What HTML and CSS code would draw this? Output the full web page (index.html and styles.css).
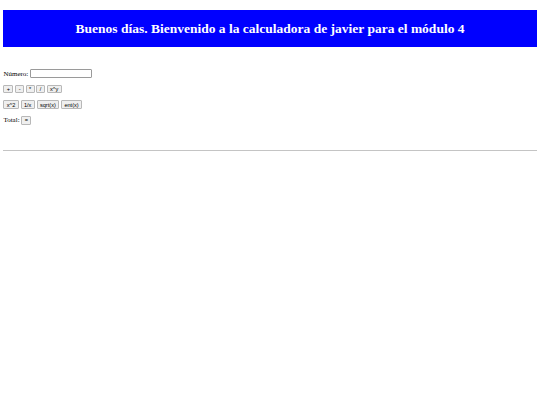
FILE: index.html
```html
<!DOCTYPE html>
<html lang="es">
<head>
<meta charset="utf-8">
<title>Calculadora</title>
<link rel="stylesheet" href="styles.css">
</head>
<body>
<h1 class="banner">Buenos días. Bienvenido a la calculadora de javier para el módulo 4</h1>
<div class="calc">
  <div class="row first">
    <label class="label" for="num">Número:</label>
    <input class="num" id="num" type="text">
  </div>
  <div class="row">
    <button class="btn">+</button>
    <button class="btn">-</button>
    <button class="btn">*</button>
    <button class="btn">/</button>
    <button class="btn">x^y</button>
  </div>
  <div class="row">
    <button class="btn">x^2</button>
    <button class="btn">1/x</button>
    <button class="btn">sqrt(x)</button>
    <button class="btn">ent(x)</button>
  </div>
  <div class="row">
    <span class="label">Total:</span>
    <button class="btn">=</button>
  </div>
</div>
<hr class="rule">
</body>
</html>
```
FILE: styles.css
```css
html, body {
  background: #ffffff;
}
body {
  margin: 0 3.4px;
  font-family: "Liberation Serif", "Times New Roman", serif;
  font-size: 7px;
  color: #000000;
}
.banner {
  margin: 9.5px 0 0;
  height: 37px;
  line-height: 37px;
  background: #0000ff;
  color: #ffffff;
  font-size: 13.5px;
  font-weight: bold;
  text-align: center;
}
.calc {
  display: flex;
  flex-direction: column;
  gap: 6.6px;
  margin-top: 22.5px;
}
.row {
  display: flex;
  align-items: center;
  gap: 1.8px;
  height: 9px;
}
.label {
  font-size: 7px;
}
.num {
  box-sizing: border-box;
  width: 62px;
  height: 9px;
  margin: 0;
  padding: 0 1px;
  border: 1px solid #9a9a9a;
  border-radius: 1px;
  background: #ffffff;
  font-size: 5.6px;
}
.btn {
  box-sizing: border-box;
  height: 8.6px;
  margin: 0;
  padding: 0 2.4px;
  border: 1px solid #b8b8b8;
  border-radius: 1px;
  background: #efefef;
  color: #000000;
  font-family: "Liberation Sans", Arial, sans-serif;
  font-size: 5.6px;
  line-height: 6px;
}
.rule {
  margin: 25px 0 0;
  height: 0;
  border: 0;
  border-top: 1px solid #c4c4c4;
}
```
